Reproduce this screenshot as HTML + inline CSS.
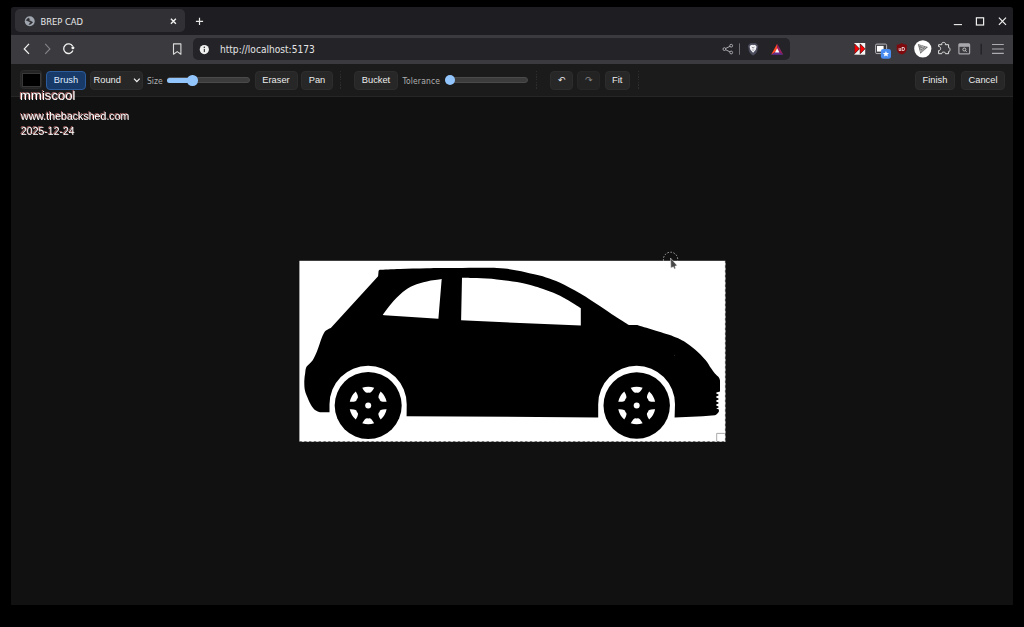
<!DOCTYPE html>
<html lang="en">
<head>
<meta charset="utf-8">
<title>BREP CAD</title>
<style>
*{box-sizing:border-box;margin:0;padding:0}
html,body{width:1024px;height:627px;background:#000;overflow:hidden}
body{font-family:"Liberation Sans",sans-serif;position:relative;color:#e6e6e6}
.abs{position:absolute}
#win{position:absolute;left:11px;top:7px;width:1002px;height:598px;background:#111111;overflow:hidden;border-radius:3px 3px 0 0}
#tabbar{position:absolute;left:0;top:0;width:1002px;height:28px;background:#1e1e22}
#tab{position:absolute;left:4.3px;top:2.4px;width:169.8px;height:22.6px;background:#313135;border-radius:5px}
#tabtitle{position:absolute;left:29.5px;top:9px;font-family:"DejaVu Sans Condensed","DejaVu Sans","Liberation Sans",sans-serif;font-stretch:condensed;font-size:9.3px;color:#e8e8ea;line-height:11px;white-space:nowrap}
#navbar{position:absolute;left:0;top:28px;width:1002px;height:29px;background:#3b3b3f}
#urlbar{position:absolute;left:182px;top:3px;width:597px;height:22px;background:#242428;border-radius:5px}
#urltext{position:absolute;left:27px;top:5.6px;font-family:"DejaVu Sans Condensed","DejaVu Sans","Liberation Sans",sans-serif;font-stretch:condensed;font-size:10.1px;color:#e4e4e6;line-height:12px;white-space:nowrap}
#toolbar{position:absolute;left:0;top:57px;width:1002px;height:33px;background:#1b1b1b;border-bottom:1px solid #262626}
.btn{position:absolute;top:7px;height:18.9px;background:#272727;border:1px solid #2d2d2d;border-radius:4px;font-size:9.3px;line-height:16px;text-align:center;color:#ececec;white-space:nowrap}
.btn.on{background:#173a68;border-color:#2c5c9c;color:#dfeaff}
.lbl{position:absolute;font-family:"DejaVu Sans Condensed","DejaVu Sans","Liberation Sans",sans-serif;font-stretch:condensed;font-size:8.45px;color:#b0b0b0;line-height:11px;white-space:nowrap;top:11.5px}
.sep{position:absolute;top:7px;height:19px;width:1px;background:repeating-linear-gradient(to bottom,#2d2d2d 0,#2d2d2d 1.4px,transparent 1.4px,transparent 2.7px)}
.track{position:absolute;height:6px;border-radius:3px;background:#3c3c3c;border:1px solid #4a4a4a}
.fill{position:absolute;height:6px;border-radius:3px;background:#93c5fd}
.thumb{position:absolute;width:11px;height:11px;border-radius:50%;background:#93c5fd}
.wm{position:absolute;left:9.7px;color:#fff;will-change:transform;white-space:nowrap;text-shadow:-0.9px -0.9px 0 #a86464}
svg{position:absolute;overflow:visible}
</style>
</head>
<body>
<div id="win">
  <div id="tabbar">
    <div id="tab"></div>
    <div id="tabtitle">BREP CAD</div>
  </div>
  <div id="navbar">
    <div id="urlbar"><div id="urltext">http://localhost:5173</div></div>
  </div>
  <div id="toolbar">
    <div class="abs" style="left:8.6px;top:6.3px;width:22.4px;height:19.1px;background:#242424;border:1px solid #2b2b2b;border-radius:3.5px"></div>
    <div class="abs" style="left:10.8px;top:9.4px;width:18.8px;height:13.5px;background:#000;border:1.2px solid #383838"></div>
    <div class="btn on" style="left:35px;width:40px">Brush</div>
    <div class="btn" style="left:79px;width:53px;text-align:left;padding-left:2.5px">Round</div>
    <svg style="left:122px;top:13px" width="8" height="7" viewBox="0 0 8 7"><path d="M1,1.6 L3.85,4.6 L6.7,1.6" fill="none" stroke="#f0f0f0" stroke-width="1.3"/></svg>
    <div class="lbl" style="left:136px">Size</div>
    <div class="track" style="left:156px;top:13.4px;width:83px"></div>
    <div class="fill" style="left:155.7px;top:13.5px;width:26px;height:5.5px"></div>
    <div class="thumb" style="left:176.3px;top:11.1px;width:10.5px;height:10.5px"></div>
    <div class="btn" style="left:243.5px;width:43px">Eraser</div>
    <div class="btn" style="left:290px;width:32px">Pan</div>
    <div class="sep" style="left:329px"></div>
    <div class="btn" style="left:343px;width:44px">Bucket</div>
    <div class="lbl" style="left:391.5px;letter-spacing:0.18px">Tolerance</div>
    <div class="track" style="left:434px;top:13px;width:83px"></div>
    <div class="thumb" style="left:433.7px;top:10.7px;width:10.6px;height:10.6px"></div>
    <div class="sep" style="left:525px"></div>
    <div class="btn" style="left:539px;width:23px">↶</div>
    <div class="btn" style="left:566px;width:23px;color:#8a8a8a;background:#232323;border-color:#272727">↷</div>
    <div class="btn" style="left:593.5px;width:25.5px">Fit</div>
    <div class="sep" style="left:626.5px"></div>
    <div class="btn" style="left:904px;width:40px">Finish</div>
    <div class="btn" style="left:950px;width:44px">Cancel</div>
  </div>
  <div class="wm" style="top:80.6px;left:9.2px;font-size:13.15px;line-height:15px">mmiscool</div>
  <div class="wm" style="top:102.7px;font-size:10.6px;line-height:12px">www.thebackshed.com</div>
  <div class="wm" style="top:117.6px;font-size:10.5px;line-height:12px">2025-12-24</div>
</div>
<svg id="car" style="left:0;top:0" width="1024" height="627" viewBox="0 0 1024 627">
<rect x="299.4" y="260.8" width="426.1" height="181" fill="#fff"/>
<path fill="#000" d="M379.60,269.70 C383.00,269.57 392.12,269.15 400.00,268.90 C407.88,268.65 417.57,268.35 426.90,268.20 C436.23,268.05 444.33,268.03 456.00,268.00 C467.67,267.97 486.75,267.58 496.90,268.00 C507.05,268.42 510.88,269.48 516.90,270.50 C522.92,271.52 528.15,272.95 533.00,274.10 C537.85,275.25 541.48,275.97 546.00,277.40 C550.52,278.83 554.40,280.03 560.10,282.70 C565.80,285.37 573.52,289.48 580.20,293.40 C586.88,297.32 594.40,302.40 600.20,306.20 C606.00,310.00 610.20,313.07 615.00,316.20 C619.80,319.33 626.67,323.53 629.00,325.00 L637.40,325.00 C640.08,325.85 647.48,328.20 653.50,330.10 C659.52,332.00 668.37,334.50 673.50,336.40 C678.63,338.30 680.72,339.32 684.30,341.50 C687.88,343.68 691.43,346.38 695.00,349.50 C698.57,352.62 703.05,357.10 705.70,360.20 C708.35,363.30 709.37,365.88 710.90,368.10 C712.43,370.32 713.57,371.93 714.90,373.50 C716.23,375.07 718.05,376.33 718.90,377.50 C719.75,378.67 719.82,380.00 720.00,380.50 L720,391.6 L716.4,392.6 L716.2,393.6 L718.5,394.5 L718.5,395.6 L716.2,396.4 L716.2,397.6 L718.5,398.5 L718.5,399.6 L716.2,400.4 L716.2,401.6 L718.5,402.5 L718.5,403.6 L716.2,404.4 L716.2,405.6 L718.5,406.5 L718.5,407.6 L716.2,408.4 L718.9,409.6 L718.9,411.6 C718,413.5 716.5,414.8 714.9,415.2 L702.8,416.3 L674.6,417.4 L675.00,404.20 A38.4,38.4 0 0 0 598.20,404.20 L598.20,417.4 L406.6,416.2 L406.70,404.30 A38.6,38.6 0 0 0 329.50,404.30 L329.50,412.3 L320.00,412.30 C319.17,411.92 316.50,411.22 315.00,410.00 C313.50,408.78 312.25,407.08 311.00,405.00 C309.75,402.92 308.52,399.95 307.50,397.50 C306.48,395.05 305.43,393.05 304.90,390.30 C304.37,387.55 304.25,383.90 304.30,381.00 C304.35,378.10 304.80,375.30 305.20,372.90 C305.60,370.50 305.45,368.72 306.70,366.60 C307.95,364.48 310.92,362.93 312.70,360.20 C314.48,357.47 315.95,353.77 317.40,350.20 C318.85,346.63 320.28,341.70 321.40,338.80 C322.52,335.90 323.20,334.25 324.10,332.80 C325.00,331.35 325.68,330.88 326.80,330.10 C327.92,329.32 330.13,328.43 330.80,328.10 L378.1,276.3 L378.6,270.8 Z"/>
<path fill="#fff" d="M441.7,279 L438.4,318.7 L384.5,315.3 Q382,315 383.00,314.60 C384.30,312.87 387.50,307.95 390.80,304.20 C394.10,300.45 399.02,295.22 402.80,292.10 C406.58,288.98 409.48,287.28 413.50,285.50 C417.52,283.72 422.22,282.48 426.90,281.40 C431.58,280.32 439.15,279.40 441.60,279.00 Z"/>
<path fill="#fff" d="M462,277.7 L461.1,320.3 L580.8,325.6 L580.80,308.20 C578.47,306.75 571.37,302.07 566.80,299.50 C562.23,296.93 557.87,294.72 553.40,292.80 C548.93,290.88 543.85,289.30 540.00,288.00 C536.15,286.70 534.15,285.98 530.30,285.00 C526.45,284.02 522.47,283.03 516.90,282.10 C511.33,281.17 503.58,280.07 496.90,279.40 C490.22,278.73 482.62,278.38 476.80,278.10 C470.98,277.82 464.47,277.77 462.00,277.70 Z"/>
<circle cx="674.4" cy="355.2" r="0.4" fill="#6a6a6a"/>
<circle cx="368.2" cy="405.5" r="33.5" fill="#000"/>
<circle cx="636.7" cy="405.5" r="33.2" fill="#000"/>
<path d="M362.23,387.67 A18.8,18.8 0 0 1 374.17,387.67 Q370.81,394.20 368.20,392.40 Q365.59,394.20 362.23,387.67 Z" fill="#fff"/>
<path d="M380.66,391.42 A18.8,18.8 0 0 1 386.62,401.75 Q379.29,402.11 379.54,398.95 Q376.68,397.59 380.66,391.42 Z" fill="#fff"/>
<path d="M386.62,409.25 A18.8,18.8 0 0 1 380.66,419.58 Q376.68,413.41 379.54,412.05 Q379.29,408.89 386.62,409.25 Z" fill="#fff"/>
<path d="M374.17,423.33 A18.8,18.8 0 0 1 362.23,423.33 Q365.59,416.80 368.20,418.60 Q370.81,416.80 374.17,423.33 Z" fill="#fff"/>
<path d="M355.74,419.58 A18.8,18.8 0 0 1 349.78,409.25 Q357.11,408.89 356.86,412.05 Q359.72,413.41 355.74,419.58 Z" fill="#fff"/>
<path d="M349.78,401.75 A18.8,18.8 0 0 1 355.74,391.42 Q359.72,397.59 356.86,398.95 Q357.11,402.11 349.78,401.75 Z" fill="#fff"/>
<circle cx="368.2" cy="405.5" r="3" fill="#fff"/>
<path d="M630.73,387.67 A18.8,18.8 0 0 1 642.67,387.67 Q639.31,394.20 636.70,392.40 Q634.09,394.20 630.73,387.67 Z" fill="#fff"/>
<path d="M649.16,391.42 A18.8,18.8 0 0 1 655.12,401.75 Q647.79,402.11 648.04,398.95 Q645.18,397.59 649.16,391.42 Z" fill="#fff"/>
<path d="M655.12,409.25 A18.8,18.8 0 0 1 649.16,419.58 Q645.18,413.41 648.04,412.05 Q647.79,408.89 655.12,409.25 Z" fill="#fff"/>
<path d="M642.67,423.33 A18.8,18.8 0 0 1 630.73,423.33 Q634.09,416.80 636.70,418.60 Q639.31,416.80 642.67,423.33 Z" fill="#fff"/>
<path d="M624.24,419.58 A18.8,18.8 0 0 1 618.28,409.25 Q625.61,408.89 625.36,412.05 Q628.22,413.41 624.24,419.58 Z" fill="#fff"/>
<path d="M618.28,401.75 A18.8,18.8 0 0 1 624.24,391.42 Q628.22,397.59 625.36,398.95 Q625.61,402.11 618.28,401.75 Z" fill="#fff"/>
<circle cx="636.7" cy="405.5" r="3" fill="#fff"/>
<path d="M299.4,441.7 H725.4 V260.8" fill="none" stroke="#111" stroke-width="0.7" stroke-dasharray="2.4 2.4" opacity=".85"/>
<path d="M716.7,441.2 V433.4 H724.8" fill="none" stroke="#a0a0a0" stroke-width="0.9"/>
<path d="M663.55,260.8 A7.15,7.15 0 1 1 677.55,260.8" fill="none" stroke="#9c9c9c" stroke-width="1" stroke-dasharray="1.7 1.4"/>
<path d="M670.5,258 L670.9,268 L673.4,266.8 L674.3,269 L675.5,268.5 L674.9,266.2 L677.1,265.5 Z" fill="#474747" stroke="#e8e8e8" stroke-width="0.5"/>
</svg>
<svg id="chrome" style="left:0;top:0" width="1024" height="627" viewBox="0 0 1024 627">
<!-- globe favicon -->
<circle cx="29.75" cy="21.2" r="4.95" fill="#a0a6af"/>
<path stroke="#2e2e32" stroke-width="0.5" stroke-linejoin="round" d="M26.2,20.4 C26.8,19.2 27.6,18.4 28.7,18 L29.7,19.4 L28.7,20.3 L30.4,20.9 L32.7,22.2 L31.5,23.5 C30.8,24.1 30,24.4 28.9,24.5 L29.8,23.3 L30.6,22.4 L28.6,21.3 L27.2,20.7 Z" fill="#2e2e32"/>
<!-- tab close -->
<path d="M170.9,18.7 L175.9,23.7 M175.9,18.7 L170.9,23.7" stroke="#f0f0f0" stroke-width="1.4" fill="none"/>
<!-- new tab plus -->
<path d="M195.9,21.4 H203.1 M199.5,17.8 V25" stroke="#e8e8e8" stroke-width="1.2" fill="none"/>
<!-- window controls -->
<path d="M953.8,24.6 H962" stroke="#f0f0f0" stroke-width="1.1" fill="none"/>
<rect x="976.4" y="17.8" width="7.2" height="7.2" fill="none" stroke="#f0f0f0" stroke-width="1.2"/>
<path d="M998.9,17.6 L1006,24.9 M1006,17.6 L998.9,24.9" stroke="#f0f0f0" stroke-width="1.2" fill="none"/>
<!-- nav arrows -->
<path d="M29,43.9 L24.3,48.9 L29,53.9" stroke="#f2f2f2" stroke-width="1.3" fill="none"/>
<path d="M45.2,43.9 L49.9,48.9 L45.2,53.9" stroke="#85858a" stroke-width="1.1" fill="none"/>
<!-- reload -->
<path d="M72.6,46.2 A4.8,4.8 0 1 0 72.9,50.6" stroke="#f2f2f2" stroke-width="1.3" fill="none"/>
<circle cx="72.9" cy="47.7" r="1.5" fill="#f2f2f2"/>
<!-- bookmark -->
<path d="M173.5,43.9 H180.9 V54.2 L177.2,51.6 L173.5,54.2 Z" stroke="#dcdcdc" stroke-width="1.1" fill="none" stroke-linejoin="round"/>
<!-- info -->
<circle cx="204.3" cy="49.6" r="4.6" fill="#f0f0f0"/>
<rect x="203.8" y="48.9" width="1" height="3.2" fill="#1e1e22"/>
<circle cx="204.3" cy="47.3" r="0.75" fill="#1e1e22"/>
<!-- share -->
<path d="M731,45.8 L724.4,49.1 L731,52.4" stroke="#b8b8bc" stroke-width="0.9" fill="none"/>
<circle cx="724.4" cy="49.1" r="1.4" fill="#1e1e22" stroke="#b8b8bc" stroke-width="0.9"/>
<circle cx="731.2" cy="45.7" r="1.4" fill="#1e1e22" stroke="#b8b8bc" stroke-width="0.9"/>
<circle cx="731.2" cy="52.5" r="1.4" fill="#1e1e22" stroke="#b8b8bc" stroke-width="0.9"/>
<path d="M739.5,43.4 V54.8" stroke="#76767a" stroke-width="0.9"/>
<!-- brave shield -->
<path d="M750.3,43.2 L755.9,43.2 L758.2,45.6 L757.3,51 C756.6,53 754.6,54.6 753.1,55.6 C751.6,54.6 749.6,53 748.9,51 L748,45.6 Z" fill="#4b4c5e"/>
<path d="M750.6,45.2 L752.2,44.7 L753.1,45.3 L754,44.7 L755.6,45.2 L756.6,46.8 L755.8,49.8 L753.1,52.8 L750.4,49.8 L749.6,46.8 Z" fill="#f4f4f6"/>
<path d="M751.8,47.2 L753.1,48 L754.4,47.2 M752.4,49.6 L753.1,50.4 L753.8,49.6" stroke="#4b4c5e" stroke-width="0.7" fill="none"/>
<!-- BAT triangle -->
<path d="M777.2,43.8 L771.1,54.8 L777.2,51 Z" fill="#ff4724"/>
<path d="M777.2,43.8 L783.3,54.8 L777.2,51 Z" fill="#9e1f63"/>
<path d="M771.1,54.8 L783.3,54.8 L777.2,51 Z" fill="#662d91"/>
<path d="M777.2,48.2 L775,52.4 L779.4,52.4 Z" fill="#fff"/>
<!-- red arrows ext -->
<rect x="854.4" y="43" width="10.8" height="11.7" fill="#f4f4f4"/>
<path d="M854.6,43.9 L859.4,48.8 L854.6,53.7 Z" fill="#f00" stroke="#300" stroke-width="0.7"/>
<path d="M860.2,43.9 L865,48.8 L860.2,53.7 Z" fill="#f00" stroke="#300" stroke-width="0.7"/>
<!-- pip -->
<rect x="875.6" y="44.1" width="11" height="9.5" rx="1.2" fill="none" stroke="#c4c4c8" stroke-width="0.9"/>
<rect x="877" y="45.9" width="6.6" height="5.7" fill="#fff"/>
<rect x="880.9" y="48.9" width="10.1" height="9.9" rx="2.4" fill="#4a8df0"/>
<path d="M885.95,50.9 L886.85,52.9 L889,53.1 L887.4,54.5 L887.9,56.6 L885.95,55.5 L884,56.6 L884.5,54.5 L882.9,53.1 L885.05,52.9 Z" fill="#fff"/>
<!-- ublock -->
<path d="M901.75,43.1 C903.2,44.3 904.8,44.7 906.8,44.7 L906.8,49.4 C906.4,52 904.4,53.5 901.75,54.6 C899.1,53.5 897.1,52 896.7,49.4 L896.7,44.7 C898.7,44.7 900.3,44.3 901.75,43.1 Z" fill="#7e0a0e"/>
<text x="898.6" y="50.6" font-family="Liberation Sans, sans-serif" font-weight="bold" font-size="5.2" fill="#f6eaea" textLength="6.3" lengthAdjust="spacingAndGlyphs">uD</text>
<!-- white circle ext -->
<circle cx="922.8" cy="48.8" r="8.6" fill="#fff"/>
<path d="M917.8,44 L928,47 L920.4,53.8 Z" fill="#6e6e6e"/>
<path d="M919.2,45.6 L925.8,47.6 M919.6,47.8 L924,49.4 M920.2,50.2 L922.2,51.2 M921.2,45 L920.6,52.2 M923.4,45.8 L921.6,52.6 M925.4,46.6 L923,51.4" stroke="#fff" stroke-width="0.55" fill="none" stroke-dasharray="0.8 0.7"/>
<!-- puzzle -->
<path d="M938.6,44.7 L941.9,44.7 C941.2,43.4 942.2,42.4 943.6,42.4 C945,42.4 946,43.4 945.3,44.7 L948.6,44.7 L948.6,47.7 C949.4,47.2 950,48.3 950,49.6 C950,50.9 949.4,51.9 948.6,51.4 L948.6,53.7 L945.4,53.7 C945.9,52.8 944.9,52.1 943.6,52.1 C942.3,52.1 941.3,52.8 941.8,53.7 L938.6,53.7 L938.6,50.5 C939.6,51 940.6,49.8 940.6,48.5 C940.6,47.2 939.6,46.1 938.6,46.6 Z" fill="none" stroke="#e0e0e0" stroke-width="1" stroke-linejoin="round"/>
<!-- sidebar/search -->
<rect x="958.9" y="43.8" width="10.7" height="10.1" rx="1" fill="none" stroke="#a8a8ac" stroke-width="1.2"/>
<rect x="958.9" y="43.8" width="10.7" height="3" fill="#a8a8ac"/>
<circle cx="964.3" cy="49.5" r="1.5" fill="none" stroke="#dcdcdc" stroke-width="0.8"/>
<path d="M965.4,50.6 L966.6,51.8" stroke="#dcdcdc" stroke-width="0.9"/>
<path d="M981.2,43.8 V54.5" stroke="#222226" stroke-width="1.4"/>
<!-- hamburger -->
<path d="M992,44.5 H1003.8 M992,49 H1003.8 M992,53.4 H1003.8" stroke="#adadb1" stroke-width="1.1"/>
</svg>
</body>
</html>
